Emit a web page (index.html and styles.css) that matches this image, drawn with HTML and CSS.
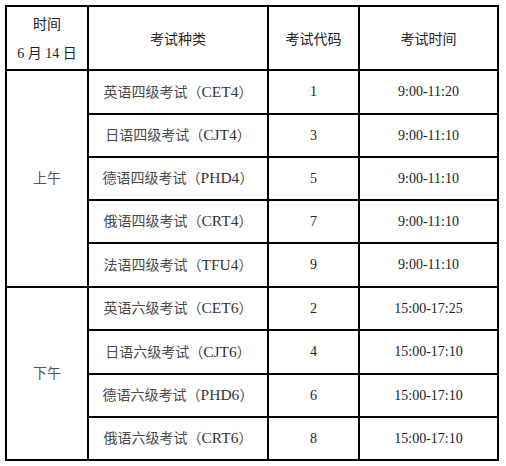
FILE: index.html
```html
<!DOCTYPE html>
<html lang="zh-CN">
<head>
<meta charset="utf-8">
<link rel="stylesheet" href="styles.css">
</head>
<body>
<table class="schedule">
  <colgroup>
    <col class="c1"><col class="c2"><col class="c3"><col class="c4">
  </colgroup>
  <thead>
    <tr class="head">
      <th class="date"><span class="line">时间</span><span class="line dl">6 月 14 日</span></th>
      <th>考试种类</th>
      <th>考试代码</th>
      <th>考试时间</th>
    </tr>
  </thead>
  <tbody>
    <tr class="tall">
      <td class="period" rowspan="5">上午</td>
      <td class="name">英语四级考试（<span class="code">CET4</span>）</td>
      <td class="num">1</td>
      <td class="num">9:00-11:20</td>
    </tr>
    <tr>
      <td class="name">日语四级考试（<span class="code">CJT4</span>）</td>
      <td class="num">3</td>
      <td class="num">9:00-11:10</td>
    </tr>
    <tr>
      <td class="name">德语四级考试（<span class="code">PHD4</span>）</td>
      <td class="num">5</td>
      <td class="num">9:00-11:10</td>
    </tr>
    <tr>
      <td class="name">俄语四级考试（<span class="code">CRT4</span>）</td>
      <td class="num">7</td>
      <td class="num">9:00-11:10</td>
    </tr>
    <tr class="tall">
      <td class="name">法语四级考试（<span class="code">TFU4</span>）</td>
      <td class="num">9</td>
      <td class="num">9:00-11:10</td>
    </tr>
    <tr>
      <td class="period" rowspan="4">下午</td>
      <td class="name">英语六级考试（<span class="code">CET6</span>）</td>
      <td class="num">2</td>
      <td class="num">15:00-17:25</td>
    </tr>
    <tr class="tall">
      <td class="name">日语六级考试（<span class="code">CJT6</span>）</td>
      <td class="num">4</td>
      <td class="num">15:00-17:10</td>
    </tr>
    <tr>
      <td class="name">德语六级考试（<span class="code">PHD6</span>）</td>
      <td class="num">6</td>
      <td class="num">15:00-17:10</td>
    </tr>
    <tr>
      <td class="name">俄语六级考试（<span class="code">CRT6</span>）</td>
      <td class="num">8</td>
      <td class="num">15:00-17:10</td>
    </tr>
  </tbody>
</table>
</body>
</html>
```

FILE: styles.css
```css
html, body {
  margin: 0;
  padding: 0;
  background: #fff;
}
body {
  padding: 5px;
  font-family: "Liberation Serif", "Noto Sans CJK SC", serif;
  font-size: 14px;
  color: #444;
}
.schedule {
  border-collapse: collapse;
  table-layout: fixed;
  width: 494px;
}
.c1 { width: 82px; }
.c2 { width: 180px; }
.c3 { width: 91px; }
.c4 { width: 139px; }
.schedule th,
.schedule td {
  border: 2px solid #000;
  padding: 0;
  text-align: center;
  vertical-align: middle;
  line-height: 20px;
}
.schedule th {
  font-family: "Noto Sans CJK SC", sans-serif;
  font-weight: 400;
  color: #222;
}
.head { height: 64px; }
tbody tr { height: 43px; }
tbody tr.tall { height: 44px; }
.date .line {
  display: block;
}
.date .dl {
  margin-top: 11px;
  font-family: "Liberation Serif", "Noto Sans CJK SC", serif;
}
.name {
  font-family: "Liberation Serif", "Noto Sans CJK SC", serif;
  color: #4a4a4a;
}
.code {
  font-size: 15.5px;
  color: #333;
}
.period {
  color: #555;
}
.num {
  color: #222;
}
```
